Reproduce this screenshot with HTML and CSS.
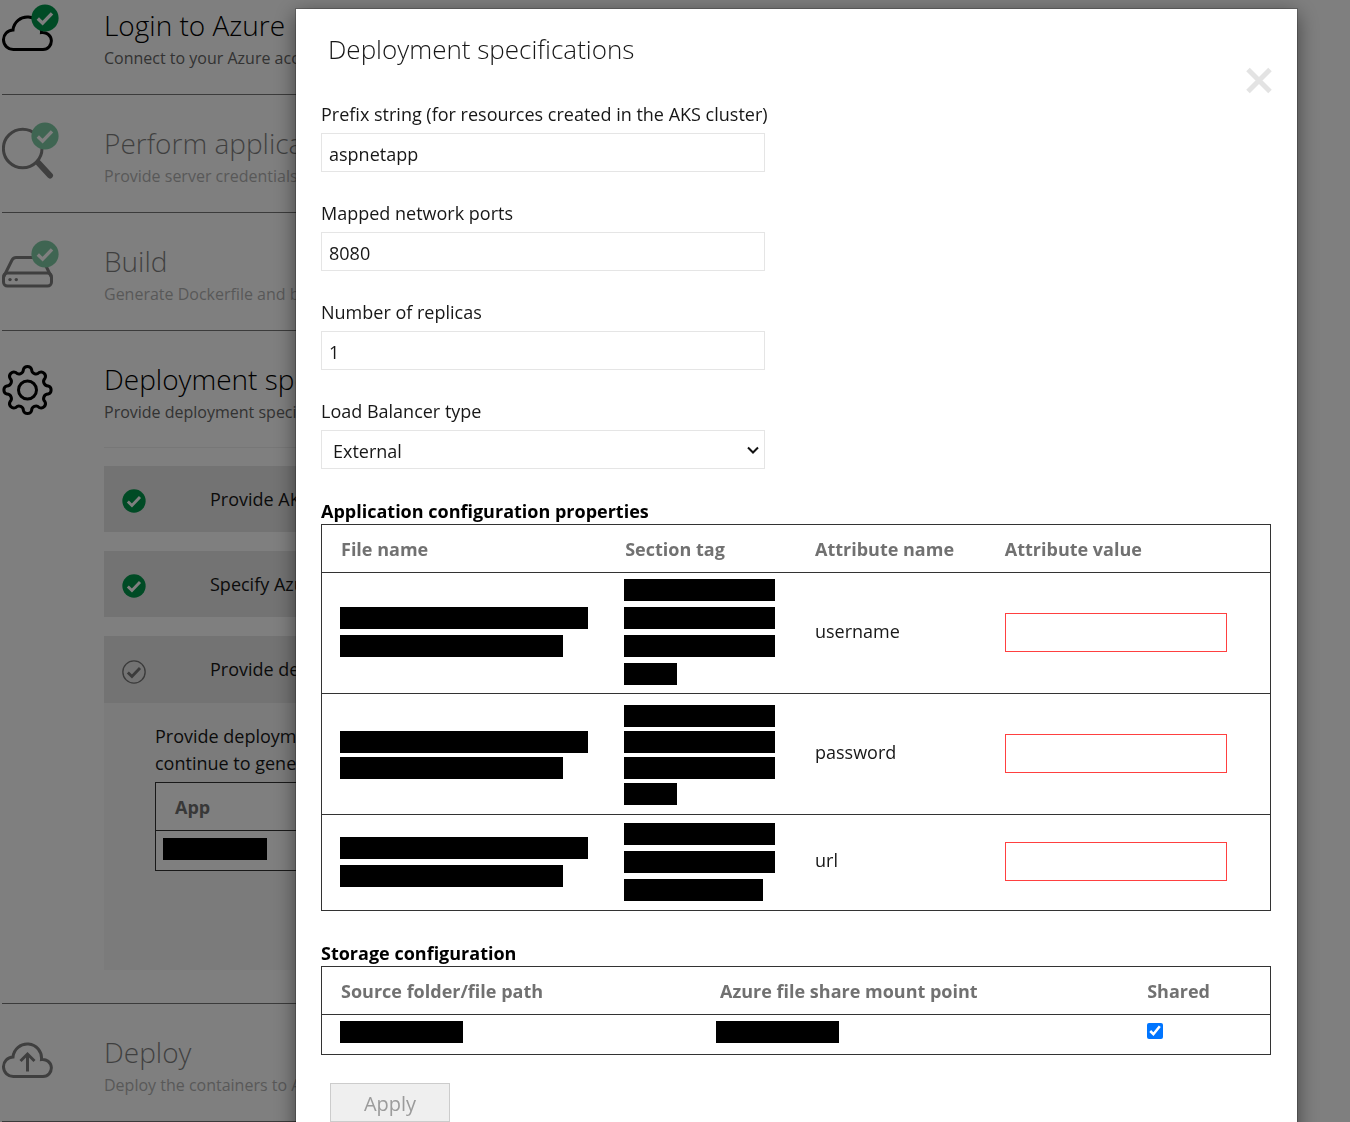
FILE: index.html
```html
<!DOCTYPE html>
<html lang="en">
<head>
<meta charset="utf-8">
<meta name="viewport" content="width=device-width, initial-scale=1">
<title>Deployment specifications</title>
<link rel="stylesheet" href="styles.css">
</head>
<body>
<svg class="defs" aria-hidden="true">
  <symbol id="badge" viewBox="0 0 28 28">
    <circle cx="14" cy="14" r="13.6" fill="#00964b"/>
    <path d="M6.8 14.6 11.6 19.2 21 9.4" fill="none" stroke="#fff" stroke-width="3.4"/>
  </symbol>
  <symbol id="badge-pending" viewBox="0 0 28 28">
    <circle cx="14" cy="14" r="13" fill="none" stroke="#767676" stroke-width="1.6"/>
    <path d="M6.8 14.6 11.6 19.2 21 9.4" fill="none" stroke="#767676" stroke-width="3.4"/>
  </symbol>
</svg>

<main class="steps">
  <section class="step step-first">
    <svg class="step-icon" viewBox="0 0 58 60" aria-hidden="true">
      <path class="line" d="M11.5 47.5A9.6 9.6 0 0 1 11 28A14.2 14.2 0 0 1 39.5 30.5A8.55 8.55 0 1 1 41 47.5Z"/>
      <use href="#badge" x="29" y="2" width="28" height="28"/>
    </svg>
    <div class="step-body">
      <h2>Login to Azure</h2>
      <p>Connect to your Azure account</p>
    </div>
  </section>

  <section class="step step-muted">
    <svg class="step-icon" viewBox="0 0 58 60" aria-hidden="true">
      <circle class="line" cx="20.7" cy="28.5" r="19.3"/>
      <path class="handle" d="M36.5 43 48 55.5"/>
      <use href="#badge" x="29" y="2" width="28" height="28"/>
    </svg>
    <div class="step-body">
      <h2>Perform application discovery</h2>
      <p>Provide server credentials and discover applications</p>
    </div>
  </section>

  <section class="step step-muted">
    <svg class="step-icon" viewBox="0 0 58 60" aria-hidden="true">
      <rect class="line" x="1.5" y="35" width="48" height="13" rx="4"/>
      <path class="line" d="M1.6 39 10 22Q11.5 19.5 14 19.5H37Q39.5 19.5 41 22L49.4 39"/>
      <circle cx="8" cy="41.6" r="1.7"/>
      <circle cx="14.3" cy="41.6" r="1.7"/>
      <use href="#badge" x="29" y="2" width="28" height="28"/>
    </svg>
    <div class="step-body">
      <h2>Build</h2>
      <p>Generate Dockerfile and build container images</p>
    </div>
  </section>

  <section class="step">
    <svg class="step-icon" viewBox="0 0 58 60" aria-hidden="true">
      <g class="line" transform="translate(25.5 34)">
        <path d="M-4.1-20.6A4.3 4.3 0 0 1 4.1-20.6A4.4 4.4 0 0 0 11.67-17.46A4.3 4.3 0 0 1 17.46-11.67A4.4 4.4 0 0 0 20.6-4.1A4.3 4.3 0 0 1 20.6 4.1A4.4 4.4 0 0 0 17.46 11.67A4.3 4.3 0 0 1 11.67 17.46A4.4 4.4 0 0 0 4.1 20.6A4.3 4.3 0 0 1-4.1 20.6A4.4 4.4 0 0 0-11.67 17.46A4.3 4.3 0 0 1-17.46 11.67A4.4 4.4 0 0 0-20.6 4.1A4.3 4.3 0 0 1-20.6-4.1A4.4 4.4 0 0 0-17.46-11.67A4.3 4.3 0 0 1-11.67-17.46A4.4 4.4 0 0 0-4.1-20.6Z"/>
        <circle r="9"/>
      </g>
    </svg>
    <div class="step-body">
      <h2>Deployment specifications</h2>
      <p>Provide deployment specifications</p>
      <div class="tasks">
        <div class="task">
          <svg class="task-icon" aria-hidden="true"><use href="#badge"/></svg>
          <span>Provide AKS cluster</span>
        </div>
        <div class="task">
          <svg class="task-icon" aria-hidden="true"><use href="#badge"/></svg>
          <span>Specify Azure file share</span>
        </div>
        <div class="task task-open">
          <svg class="task-icon" aria-hidden="true"><use href="#badge-pending"/></svg>
          <span>Provide deployment configuration</span>
        </div>
        <div class="task-panel">
          <p>Provide deployment specifications for each application<br>continue to generate specs</p>
          <table class="grid">
            <thead><tr><th scope="col">App</th></tr></thead>
            <tbody><tr><td class="tight"><span class="bar bar-app"></span></td></tr></tbody>
          </table>
        </div>
      </div>
    </div>
  </section>

  <section class="step step-muted">
    <svg class="step-icon" viewBox="0 0 58 60" aria-hidden="true">
      <path class="line" d="M11.5 47.5A9.6 9.6 0 0 1 11 28A14.2 14.2 0 0 1 39.5 30.5A8.55 8.55 0 1 1 41 47.5Z"/>
      <path class="line" d="M25.5 42.5V25.5M18.5 32 25.5 25 32.5 32"/>
    </svg>
    <div class="step-body">
      <h2>Deploy</h2>
      <p>Deploy the containers to AKS</p>
    </div>
  </section>
</main>

<div class="overlay">
  <div class="dialog" role="dialog" aria-modal="true" aria-labelledby="dialog-title">
    <header class="dialog-header">
      <h1 id="dialog-title">Deployment specifications</h1>
      <button class="close" type="button" aria-label="Close">
        <svg viewBox="0 0 26 26" aria-hidden="true"><path d="M2 2 24 24M24 2 2 24"/></svg>
      </button>
    </header>
    <form class="form">
      <div class="field">
        <label for="prefix">Prefix string (for resources created in the AKS cluster)</label>
        <input id="prefix" type="text" value="aspnetapp">
      </div>
      <div class="field">
        <label for="ports">Mapped network ports</label>
        <input id="ports" type="text" value="8080">
      </div>
      <div class="field">
        <label for="replicas">Number of replicas</label>
        <input id="replicas" type="text" value="1">
      </div>
      <div class="field">
        <label for="balancer">Load Balancer type</label>
        <div class="select">
          <select id="balancer"><option>External</option><option>Internal</option></select>
          <svg viewBox="0 0 12 8" aria-hidden="true"><path d="M1 1.5 6 6.5 11 1.5"/></svg>
        </div>
      </div>

      <section class="group">
        <h2>Application configuration properties</h2>
        <table class="grid config">
          <colgroup><col class="w30"><col class="w20"><col class="w20"><col class="w30"></colgroup>
          <thead>
            <tr><th scope="col">File name</th><th scope="col">Section tag</th><th scope="col">Attribute name</th><th scope="col">Attribute value</th></tr>
          </thead>
          <tbody>
            <tr class="tall">
              <td class="redacted"><div class="bars"><span class="bar bar-file"></span><span class="bar bar-file-end"></span></div></td>
              <td class="redacted"><div class="bars"><span class="bar bar-tag"></span><span class="bar bar-tag"></span><span class="bar bar-tag"></span><span class="bar bar-tag-end"></span></div></td>
              <td class="name">username</td>
              <td><input type="text" class="missing" aria-label="Value of username"></td>
            </tr>
            <tr class="tall">
              <td class="redacted"><div class="bars dense"><span class="bar bar-file"></span><span class="bar bar-file-end"></span></div></td>
              <td class="redacted"><div class="bars dense"><span class="bar bar-tag"></span><span class="bar bar-tag"></span><span class="bar bar-tag"></span><span class="bar bar-tag-end"></span></div></td>
              <td class="name">password</td>
              <td><input type="text" class="missing" aria-label="Value of password"></td>
            </tr>
            <tr class="medium">
              <td class="redacted"><div class="bars"><span class="bar bar-file"></span><span class="bar bar-file-end"></span></div></td>
              <td class="redacted"><div class="bars"><span class="bar bar-tag"></span><span class="bar bar-tag"></span><span class="bar bar-tag-last"></span></div></td>
              <td class="name">url</td>
              <td><input type="text" class="missing" aria-label="Value of url"></td>
            </tr>
          </tbody>
        </table>
      </section>

      <section class="group">
        <h2>Storage configuration</h2>
        <table class="grid storage">
          <colgroup><col class="w40"><col class="w45"><col class="w15"></colgroup>
          <thead>
            <tr><th scope="col">Source folder/file path</th><th scope="col">Azure file share mount point</th><th scope="col">Shared</th></tr>
          </thead>
          <tbody>
            <tr>
              <td class="redacted"><span class="bar bar-path"></span></td>
              <td class="mount"><span class="bar bar-path"></span></td>
              <td><input type="checkbox" checked aria-label="Shared"></td>
            </tr>
          </tbody>
        </table>
      </section>

      <button class="apply" type="button" disabled>Apply</button>
    </form>
  </div>
</div>
</body>
</html>
```

FILE: styles.css
```css
* { box-sizing: border-box; }

body {
  margin: 0;
  background: #fff;
  color: #171717;
  font: 18px/27px "Open Sans", "Noto Sans", sans-serif;
}

h1, h2, p { margin: 0; }

input, select, button { font: inherit; color: inherit; }

.defs { display: none; }

/* Wizard steps behind the dialog */
.steps { margin: 0 60px 0 2px; }

.step {
  display: grid;
  grid-template-columns: 102px minmax(0, 1fr);
  padding: 29px 0 24px;
  border-bottom: 1px solid #767676;
}

.step-first { padding-top: 6px; }

.step-icon {
  width: 58px;
  height: 60px;
  margin-top: -4px;
}

.line { fill: none; stroke: #000; stroke-width: 3; }
.handle { fill: none; stroke: #000; stroke-width: 6; stroke-linecap: round; }

.step h2 {
  padding-bottom: 2px;
  color: #000;
  font-size: 28px;
  font-weight: 300;
  line-height: 38px;
  white-space: nowrap;
}

.step-body > p {
  color: #666;
  font-size: 16px;
  line-height: 24px;
}

.step-muted .step-icon,
.step-muted .step-body { opacity: .5; }

.tasks {
  margin: 23px 0 9px;
  padding-top: 18px;
  border-top: 1px solid #eee;
}

.task {
  display: flex;
  align-items: center;
  height: 66px;
  margin-bottom: 19px;
  padding-left: 18px;
  background: #e6e6e6;
}

.task-open { height: 67px; margin-bottom: 0; }

.task-icon {
  width: 24px;
  height: 24px;
  margin: 4px 64px 0 0;
}

.task-panel {
  min-height: 267px;
  padding: 20px 51px 40px;
  background: #f7f7f7;
}

.task-panel .grid { margin-top: 5px; background: #fff; }

/* Bordered tables */
.grid {
  width: 100%;
  border: 1px solid #333;
  border-collapse: collapse;
  table-layout: fixed;
}

.grid th {
  height: 48px;
  padding: 2px 19px 0;
  border-bottom: 1px solid #333;
  color: #717171;
  font-weight: 700;
  text-align: left;
}

.grid td {
  height: 40px;
  padding: 0 19px 2px;
  border-bottom: 1px solid #333;
}

.grid .redacted { padding-left: 18px; }
.grid .name { padding-bottom: 4px; }
.grid .tight { padding: 0 7px 4px; }
.grid .tall td { height: 121px; }
.grid .medium td { height: 96px; }

.bars { display: grid; gap: 6px; }
.dense { gap: 4px; padding-top: 4px; }

.bar { display: block; height: 22px; background: #000; }
.bar-app { width: 104px; }
.bar-file { width: 248px; }
.bar-file-end { width: 223px; }
.bar-tag { width: 151px; }
.bar-tag-end { width: 53px; }
.bar-tag-last { width: 139px; }
.bar-path { width: 123px; }

.w15 { width: 15%; }
.w20 { width: 20%; }
.w30 { width: 30%; }
.w40 { width: 40%; }
.w45 { width: 45%; }

/* Dialog */
.overlay {
  position: fixed;
  inset: 0;
  overflow-y: auto;
  scrollbar-width: none;
  padding: 9px 53px 0 296px;
  background: rgba(0, 0, 0, .5);
}

.dialog {
  background: #fff;
  box-shadow: 0 0 0 1px rgba(0, 0, 0, .2), 0 5px 20px rgba(0, 0, 0, .5);
}

.dialog-header {
  display: flex;
  align-items: flex-end;
  justify-content: space-between;
  padding: 20px 25px 7px 32px;
}

.dialog-header h1 {
  padding-bottom: 25px;
  font-size: 26px;
  font-weight: 300;
  line-height: 40px;
}

.close {
  display: flex;
  padding: 0;
  border: 0;
  background: none;
}

.close svg {
  width: 26px;
  height: 27px;
  fill: none;
  stroke: #e3e3e3;
  stroke-width: 5;
}

.form { padding: 0 26px 24px 25px; }

.field {
  display: grid;
  grid-template-columns: minmax(0, 1fr);
  gap: 5px;
  width: 444px;
  max-width: 100%;
  margin-bottom: 28px;
}

.field label { white-space: nowrap; }

.field input,
.select select,
.missing {
  display: block;
  width: 100%;
  height: 39px;
  padding: 2px 7px 0;
  border: 1px solid #e5e5e5;
  border-radius: 0;
  background: #fff;
  outline: 0;
}

.select { display: grid; align-items: center; }
.select > * { grid-area: 1 / 1; }
.select select { appearance: none; padding: 4px 11px 0; }

.select svg {
  justify-self: end;
  width: 12px;
  height: 8px;
  margin-right: 6px;
  fill: none;
  stroke: #111;
  stroke-width: 2;
  pointer-events: none;
}

.group { margin-bottom: 28px; }

.group h2 {
  padding-top: 2px;
  color: #000;
  font-size: 18px;
  font-weight: 700;
  line-height: 25px;
}

.grid .missing { width: 222px; max-width: 100%; border-color: #ff4040; }

.storage .mount { padding-left: 15px; }
.storage tbody td { padding-bottom: 6px; }

.storage input {
  display: block;
  width: 16px;
  height: 16px;
  margin: 0 0 2px;
  accent-color: #0075ff;
}

.apply {
  width: 120px;
  height: 39px;
  margin-left: 9px;
  padding: 2px 0 0;
  border: 1px solid #ccc;
  background: #efefef;
  color: #9b9b9b;
  font-size: 20px;
}
```
